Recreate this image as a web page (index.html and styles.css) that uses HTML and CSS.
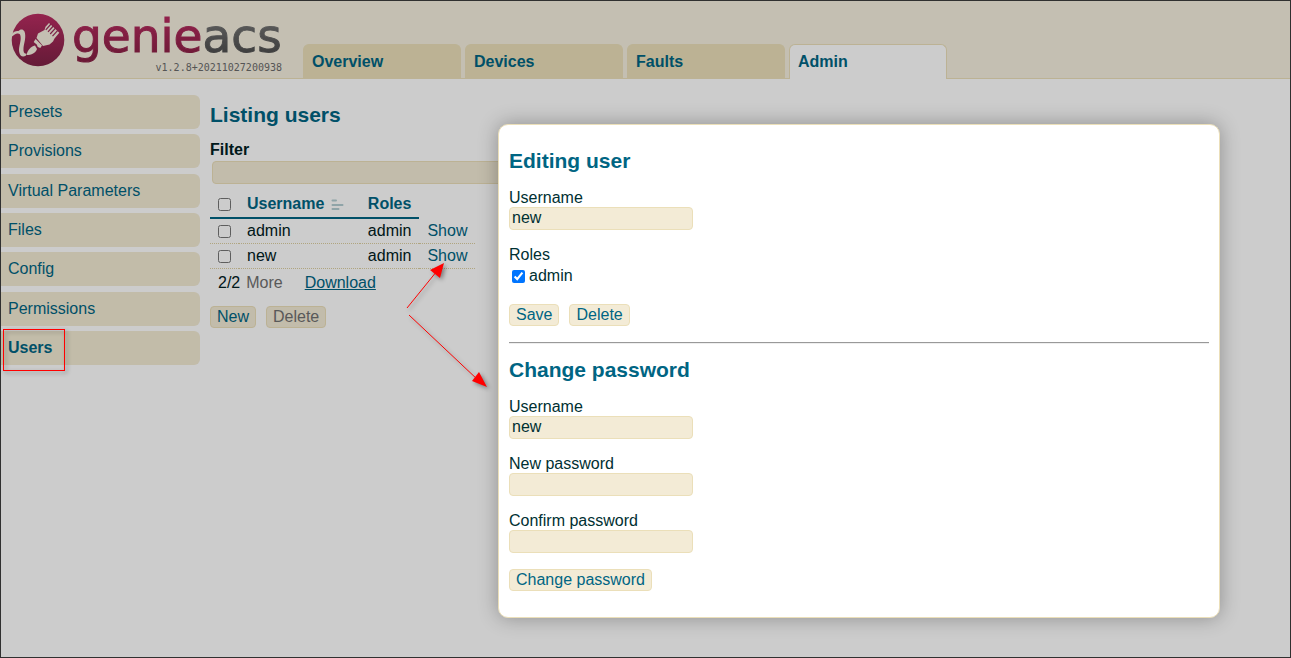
FILE: index.html
```
<!DOCTYPE html>
<html lang="en">
<head>
<meta charset="utf-8">
<title>Users - GenieACS</title>
<link rel="stylesheet" href="styles.css">
</head>
<body>
<div class="frame">
  <header class="header">
    <div class="logo">
      <svg class="logo-mark" viewBox="0 0 54 54" aria-hidden="true">
        <defs>
          <linearGradient id="disc" x1="0" y1="0" x2="0" y2="1">
            <stop offset="0" stop-color="#ba2d62"/>
            <stop offset="1" stop-color="#7e2145"/>
          </linearGradient>
        </defs>
        <circle cx="27" cy="27" r="26.3" fill="url(#disc)"/>
        <path class="mark" d="M0 21.500 C3 18.500 5 17.500 7.500 18 C9 16 12 15.500 13.500 18.500 C15.500 24 13 30 12.500 35 C12.200 39 13 41 15.500 40.700 L15 42.500 C12 44.500 9 43.500 8.200 39 C7.300 34 10.500 28 9.500 23 C9 20 6.500 20 3 22 L1 23.500 Z"/>
        <path class="mark" d="M15.500 42 C16.500 37.500 19.500 33.500 24 32.500 L26 36 C24.500 40 20.500 42 15.500 42 Z"/>
        <path class="mark" d="M22.700 29 L24.600 26 L31 32.500 L29.300 35 L26.800 34 L25.700 31.500 Z"/>
        <path class="mark" d="M25.500 25 L27 20.500 L33.500 17 L34.500 13.800 L38 10 L48.300 19.700 L43.500 25.500 L42 28.500 L38.500 31.500 L32 33 Z"/>
        <path class="gap" d="M40 11L34.800 16.800M42.300 13L37 18.900M44.500 15.200L39.200 21M46.800 17.300L41.500 23.100"/>
      </svg>
      <div class="logo-text">
        <div class="wordmark"><span class="genie">genie</span><span class="acs">acs</span></div>
        <div class="version">v1.2.8+20211027200938</div>
      </div>
    </div>
    <nav class="tabs">
      <a class="tab" href="#overview">Overview</a>
      <a class="tab" href="#devices">Devices</a>
      <a class="tab" href="#faults">Faults</a>
      <a class="tab active" href="#admin">Admin</a>
    </nav>
  </header>
  <div class="content">
    <nav class="side">
      <a href="#presets">Presets</a>
      <a href="#provisions">Provisions</a>
      <a href="#virtual">Virtual Parameters</a>
      <a href="#files">Files</a>
      <a href="#config">Config</a>
      <a href="#permissions">Permissions</a>
      <a class="active" href="#users">Users</a>
    </nav>
    <main class="main">
      <h1>Listing users</h1>
      <label class="filter-label" for="filter">Filter</label>
      <input class="filter" id="filter" type="text">
      <table class="users">
        <thead>
          <tr>
            <th><input type="checkbox" aria-label="Select all"></th>
            <th>Username
              <svg class="sort" viewBox="0 0 12 11" aria-hidden="true"><path d="M1 1.500H4.500M1 6H11M1 10H7"/></svg>
            </th>
            <th>Roles</th>
          </tr>
        </thead>
        <tbody>
          <tr><td><input type="checkbox" aria-label="Select admin"></td><td>admin</td><td>admin</td><td><a href="#show-admin">Show</a></td></tr>
          <tr><td><input type="checkbox" aria-label="Select new"></td><td>new</td><td>admin</td><td><a href="#show-new">Show</a></td></tr>
        </tbody>
      </table>
      <div class="table-foot">
        <span>2/2</span>
        <button class="more" type="button" disabled>More</button>
        <a class="download" href="#download">Download</a>
      </div>
      <div class="actions">
        <button class="btn" type="button">New</button>
        <button class="btn" type="button" disabled>Delete</button>
      </div>
    </main>
  </div>

  <div class="overlay">
    <section class="dialog" role="dialog" aria-label="Editing user">
      <form>
        <h1>Editing user</h1>
        <div class="field">
          <label for="username">Username</label>
          <input class="text" id="username" type="text" value="new">
        </div>
        <div class="field">
          <span>Roles</span>
          <label class="check"><input type="checkbox" checked>admin</label>
        </div>
        <div class="actions">
          <button class="btn" type="button">Save</button>
          <button class="btn" type="button">Delete</button>
        </div>
      </form>
      <hr>
      <form>
        <h1>Change password</h1>
        <div class="field">
          <label for="pw-user">Username</label>
          <input class="text" id="pw-user" type="text" value="new">
        </div>
        <div class="field">
          <label for="pw-new">New password</label>
          <input class="text" id="pw-new" type="password">
        </div>
        <div class="field">
          <label for="pw-confirm">Confirm password</label>
          <input class="text" id="pw-confirm" type="password">
        </div>
        <div class="actions">
          <button class="btn" type="button">Change password</button>
        </div>
      </form>
    </section>
  </div>

  <svg class="marks" width="500" height="400" aria-hidden="true">
    <rect x="2.500" y="328.500" width="61" height="41" fill="none" stroke="#f00"/>
    <g stroke="#f00" fill="#f00">
      <path d="M406 307L436 270M408 314L477 379"/>
      <path stroke="none" d="M443 262L439 277L429 269ZM486 386L471 380L478 371Z"/>
    </g>
  </svg>
</div>
</body>
</html>
```
FILE: styles.css
```
* { box-sizing: border-box; }

body {
  margin: 0;
  font: 16px/18px "Liberation Sans", Arial, sans-serif;
  color: #003032;
  background: #fff;
}

a { color: #006583; text-decoration: none; }

h1 {
  margin: 0 0 16px;
  font-size: 21px;
  line-height: 24px;
  color: #006583;
}

input, button { font: inherit; color: inherit; }

input[type="checkbox"] { width: 13px; height: 13px; margin: 0; }

.frame {
  position: relative;
  min-height: 100vh;
  border: 1px solid #303030;
}

.header {
  display: flex;
  align-items: flex-end;
  gap: 21px;
  height: 78px;
  background: #f5efdf;
  border-bottom: 1px solid #ebdfb9;
}

.logo {
  display: flex;
  align-self: stretch;
  align-items: flex-start;
  gap: 7px;
  padding: 12px 0 0 10px;
}

.logo-mark { width: 54px; height: 54px; }
.mark { fill: #f5efdf; }
.gap { fill: none; stroke: #9c2857; stroke-width: 1.2; }

.logo-text { width: 210px; }

.wordmark {
  font: 47px/46px "DejaVu Sans", sans-serif;
  white-space: nowrap;
}

.genie, .acs {
  color: transparent;
  -webkit-text-stroke: 1px transparent;
  background: linear-gradient(#b52a5e 20%, #882044 90%);
  -webkit-background-clip: text;
  background-clip: text;
}

.acs { background-image: linear-gradient(#707070 30%, #505050 80%); }

.version {
  margin-top: 3px;
  font: 10px/12px "DejaVu Sans Mono", monospace;
  text-align: right;
  color: #6b6b6b;
}

.tabs { display: flex; gap: 4px; margin-bottom: -1px; }

.tab {
  width: 158px;
  padding: 8px 8px 8px;
  border: 1px solid #ebdfb9;
  border-bottom: 0;
  border-radius: 6px 6px 0 0;
  background: #ebdfb9;
  font-weight: bold;
}

.tab.active { background: #fff; }

.content {
  display: flex;
  align-items: flex-start;
  gap: 10px;
  padding-top: 16px;
}

.side {
  display: flex;
  flex-direction: column;
  justify-content: space-between;
  width: 199px;
  min-height: 270px;
}

.side a {
  padding: 8px 7px;
  border-radius: 0 6px 6px 0;
  background: #f3ebd4;
}

.side .active { font-weight: bold; }

.main { flex: 1; padding-top: 8px; }

.main h1 { margin-bottom: 14px; }

.filter-label { display: block; font-weight: bold; color: #002022; }

.filter {
  display: block;
  width: 65%;
  height: 23px;
  margin: 2px 2px 7px;
}

.filter, .text, .btn {
  border: 1px solid #ebdfb9;
  border-radius: 4px;
  background: #f3ebd6;
}

.users { border-collapse: separate; border-spacing: 0; color: #002022; }

.users th, .users td { padding: 3px 8px; text-align: left; }

.users th {
  padding: 4px 8px;
  border-bottom: 2px solid #006583;
  color: #006583;
}

.users td { border-bottom: 1px dotted #dccf9f; }

.users input { display: block; }

.sort {
  width: 13px;
  height: 11px;
  margin: 0 8px 0 2px;
  vertical-align: -1px;
  fill: none;
  stroke: #b3cdd2;
  stroke-width: 2;
  stroke-linecap: round;
}

.table-foot {
  display: flex;
  gap: 6px;
  padding: 5px 8px 14px;
  color: #002022;
}

.more { padding: 0; border: 0; background: none; color: #707070; }

.download { margin-left: 16px; text-decoration: underline; }

.actions { display: flex; gap: 10px; }

.btn { height: 22px; padding: 0 6px; line-height: 18px; color: #006583; }
.btn:disabled { color: #707070; }

.overlay {
  position: absolute;
  inset: 0;
  display: flex;
  justify-content: flex-end;
  align-items: flex-start;
  padding: 123px 70px 0 0;
  background: rgba(0, 0, 0, 0.2);
}

.dialog {
  width: 59.23%;
  padding: 10px 10px 26px;
  border: 1px solid #ebdfb9;
  border-radius: 10px;
  background: #fff;
  box-shadow: 0 0 20px rgba(0, 0, 0, 0.3);
}

.dialog h1 { padding-top: 14px; }

.field { display: flex; flex-direction: column; align-items: flex-start; margin-bottom: 16px; }

.text { width: 184px; height: 23px; padding: 0 2px 2px; }

.check { display: flex; align-items: center; gap: 4px; height: 24px; padding-left: 3px; }

hr {
  margin: 16px 0 0;
  border: 0;
  border-top: 1px solid #999;
  border-bottom: 1px solid #eee;
}

.marks {
  position: absolute;
  top: 0;
  left: 0;
  pointer-events: none;
  filter: drop-shadow(2px 2px 2px rgba(0, 0, 0, 0.4));
}
```
